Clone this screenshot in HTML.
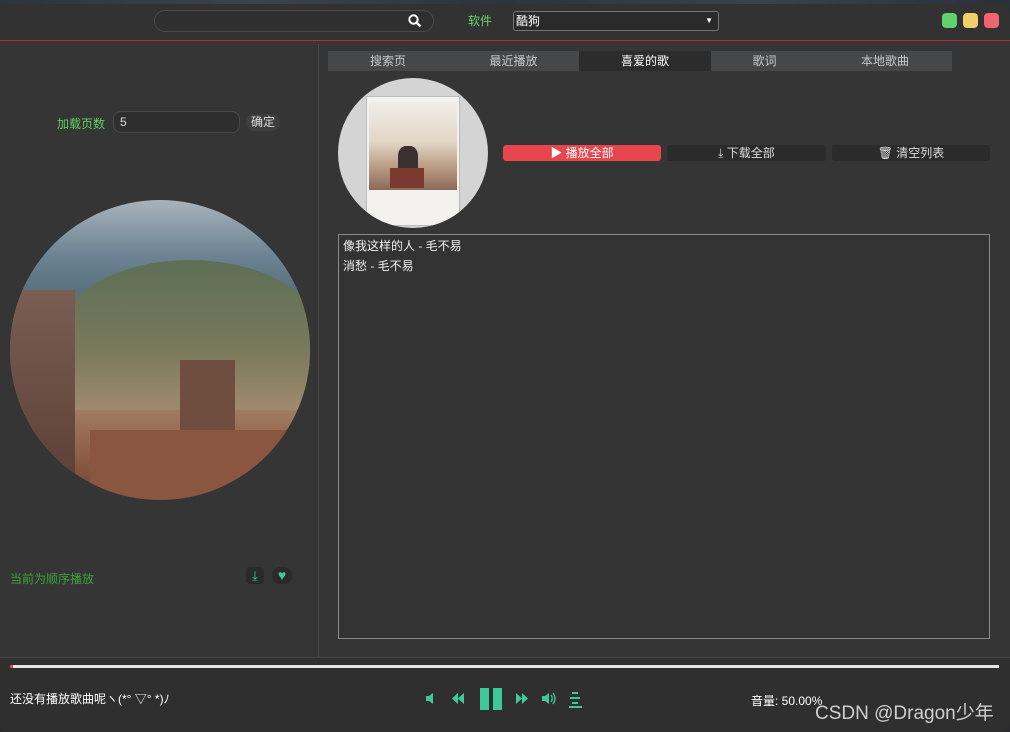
<!DOCTYPE html>
<html><head><meta charset="utf-8"><style>
*{margin:0;padding:0;box-sizing:border-box}
body{width:1010px;height:732px;overflow:hidden;background:#2a2c30;font-family:"Liberation Sans","Noto Sans CJK SC",sans-serif;font-size:12px;color:#ddd;position:relative}
.win{position:absolute;left:0;top:4px;width:1010px;height:728px;background:#353535;border-radius:8px;overflow:hidden}
.top{position:absolute;left:0;top:0;width:1010px;height:37px;background:#323232;border-bottom:1px solid #b0303a}
.a{position:absolute}
.tabs{position:absolute;left:328px;top:47px;width:624px;height:20px;background:#454749;display:flex}
.tabs div{flex:none;text-align:center;line-height:20px;color:#c8c8c8;font-size:12px}
.btn{position:absolute;top:141px;height:16px;border-radius:3px;background:#2b2b2b;color:#ddd;text-align:center;line-height:16px;font-size:12px}
</style></head><body>
<div class="a" style="left:0;top:0;width:1010px;height:12px;background:linear-gradient(90deg,#2c3440,#3a4350,#2c3440,#39424e,#2a313b)"></div>
<div class="win">
<div class="top">
 <div class="a" style="left:154px;top:6px;width:280px;height:22px;border:1px solid #4a4a4a;border-radius:11px;background:#2f2f2f"></div>
 <svg class="a" style="left:408px;top:10px" width="14" height="14" viewBox="0 0 14 14"><circle cx="5.5" cy="5.5" r="4.2" stroke="#fff" stroke-width="2" fill="none"/><path d="M8.5 8.5 L12.5 12.5" stroke="#fff" stroke-width="2.4"/></svg>
 <div class="a" style="left:468px;top:8px;color:#6bd36b;font-size:12px">软件</div>
 <div class="a" style="left:513px;top:7px;width:206px;height:20px;border:1px solid #777;border-radius:3px;background:#2a2a2a;color:#fff;font-size:12px;line-height:18px;padding-left:2px">酷狗<span style="position:absolute;right:5px;top:0;font-size:8px">▼</span></div>
 <div class="a" style="left:942px;top:9px;width:15px;height:15px;border-radius:4px;background:#62d16b"></div>
 <div class="a" style="left:963px;top:9px;width:15px;height:15px;border-radius:4px;background:#f0cf6a"></div>
 <div class="a" style="left:984px;top:9px;width:15px;height:15px;border-radius:4px;background:#f1646e"></div>
</div>
<div class="a" style="left:318px;top:40px;width:1px;height:614px;background:#4a4a4a"></div>
<div class="a" style="left:0;top:653px;width:1010px;height:75px;background:#2f2f2f;border-top:1px solid #444"></div>
<div class="a" style="left:57px;top:111px;color:#5fcf5f;font-size:12px">加载页数</div>
<div class="a" style="left:113px;top:107px;width:127px;height:22px;border:1px solid #4a4a4a;border-radius:8px;background:#2e2e2e;color:#ddd;padding:3px 6px;font-size:12px">5</div>
<div class="a" style="left:246px;top:110px;width:34px;height:17px;border-radius:8px;background:#3e3e3e;color:#ddd;font-size:12px;text-align:center;line-height:17px">确定</div>
<div class="a" style="left:10px;top:196px;width:300px;height:300px;border-radius:50%;overflow:hidden;background:linear-gradient(180deg,#a8b3bc 0%,#6d8494 18%,#58727e 30%,#6c7a5c 42%,#8a7a62 55%,#a07c62 70%,#8f5e46 85%,#6b4434 100%)">
 <div class="a" style="left:50px;top:60px;width:260px;height:150px;border-radius:50% 50% 0 0;background:linear-gradient(180deg,#5d6f55,#7a7a5c 60%,#a08a6e)"></div>
 <div class="a" style="left:0;top:90px;width:65px;height:210px;background:linear-gradient(180deg,#7a5e54,#5a3e34)"></div>
 <div class="a" style="left:170px;top:160px;width:55px;height:140px;background:#6f4e40"></div>
 <div class="a" style="left:80px;top:230px;width:230px;height:70px;background:#8a5640"></div>
</div>
<div class="a" style="left:10px;top:566px;color:#3aa33a;font-size:12px">当前为顺序播放</div>
<div class="a" style="left:246px;top:563px;width:18px;height:17px;border-radius:4px;background:#2a2a2a;color:#3ec99a;font-size:13px;text-align:center;line-height:17px">⤓</div>
<div class="a" style="left:272px;top:563px;width:20px;height:17px;border-radius:8px;background:#2a2a2a;color:#3ec99a;font-size:14px;text-align:center;line-height:17px">♥</div>
<div class="tabs">
 <div style="width:120px">搜索页</div><div style="width:131px">最近播放</div><div style="width:132px;background:#2c2c2c;color:#fff">喜爱的歌</div><div style="width:107px">歌词</div><div style="width:134px">本地歌曲</div>
</div>
<div class="a" style="left:338px;top:74px;width:150px;height:150px;border-radius:50%;background:#d4d4d4;overflow:hidden">
 <div class="a" style="left:28px;top:18px;width:94px;height:130px;background:#f4f2ee;border:1px solid #bbb"></div>
 <div class="a" style="left:31px;top:24px;width:88px;height:88px;background:linear-gradient(180deg,#f0eee8,#e2d6c6 45%,#b89a80 75%,#8a6a58)"></div>
 <div class="a" style="left:60px;top:68px;width:20px;height:24px;border-radius:40% 40% 0 0;background:#3a3030"></div>
 <div class="a" style="left:52px;top:90px;width:34px;height:20px;background:#7a3a30"></div>
</div>
<div class="btn" style="left:503px;width:158px;background:#e8464e;color:#fff">▶ 播放全部</div>
<div class="btn" style="left:667px;width:159px">⤓ 下载全部</div>
<div class="btn" style="left:832px;width:158px">🗑 清空列表</div>
<div class="a" style="left:338px;top:230px;width:652px;height:405px;border:1px solid #8a8a8a;background:#333">
 <div style="padding:1px 4px;color:#f0f0f0;font-size:12px;line-height:20px">像我这样的人 - 毛不易<br>消愁 - 毛不易</div>
</div>
<div class="a" style="left:10px;top:661px;width:989px;height:3px;background:#e6e6e6"></div>
<div class="a" style="left:10px;top:661px;width:3px;height:3px;background:#e8464e"></div>
<div class="a" style="left:10px;top:686px;color:#fff;font-size:12px">还没有播放歌曲呢ヽ(*° ▽° *)ﾉ</div>
<svg class="a" style="left:420px;top:682px" width="170" height="30" viewBox="0 0 170 30">
 <g fill="#3ec99a">
 <rect x="6" y="10" width="3" height="5"/><path d="M9 10 L13 7 L13 18 L9 15Z"/>
 <path d="M32 7 L38 12.5 L32 18Z M38 7 L44 12.5 L38 18Z" transform="translate(76,0) scale(-1,1) translate(0,0)"/>
 <path d="M44 7 L38 12.5 L44 18Z M38 7 L32 12.5 L38 18Z"/>
 <rect x="60" y="2" width="9" height="22"/><rect x="73" y="2" width="9" height="22"/>
 <path d="M96 7 L102 12.5 L96 18Z M102 7 L108 12.5 L102 18Z"/>
 <rect x="122" y="10" width="3" height="5"/><path d="M125 10 L129 7 L129 18 L125 15Z"/>
 <path d="M131 9 Q133.5 12.5 131 16" stroke="#3ec99a" stroke-width="1.3" fill="none"/><path d="M133 7 Q137 12.5 133 18" stroke="#3ec99a" stroke-width="1.3" fill="none"/>
 <rect x="152" y="6" width="6" height="2"/><rect x="150" y="11" width="10" height="2"/><rect x="152" y="16" width="6" height="2"/><rect x="149" y="20" width="13" height="2"/>
 </g>
</svg>
<div class="a" style="left:751px;top:688px;color:#fff;font-size:12px">音量: 50.00%</div>
<div class="a" style="left:815px;top:694px;color:#e0e0e0;font-size:19px;opacity:.9">CSDN @Dragon少年</div>
</div>
</body></html>
